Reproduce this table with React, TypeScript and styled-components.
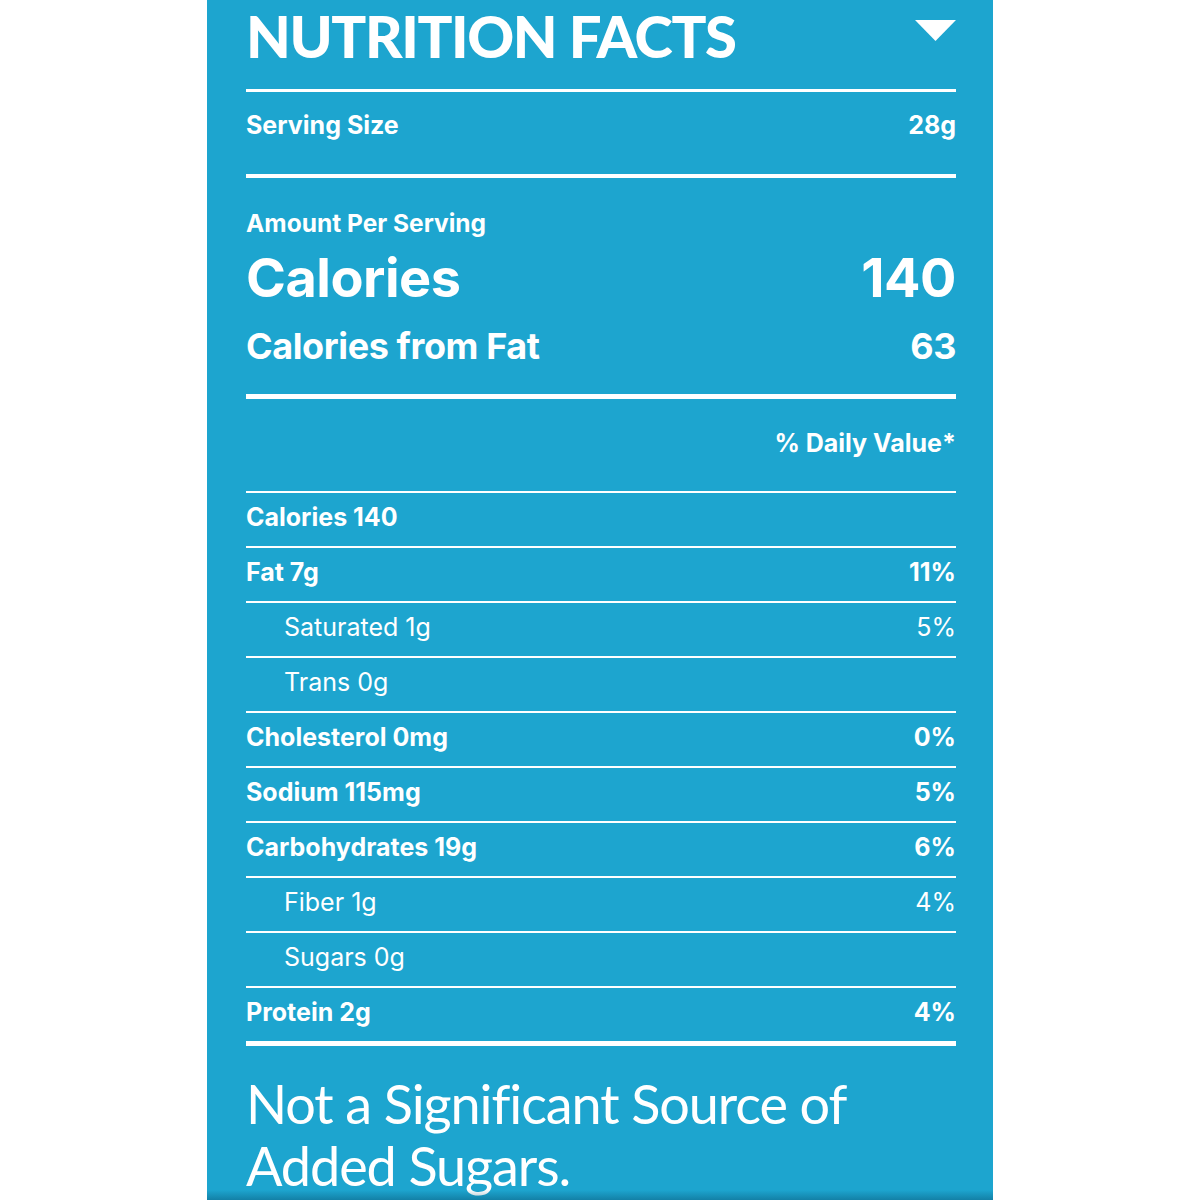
import React from "react";
import styled, { createGlobalStyle } from "styled-components";

const GlobalStyle = createGlobalStyle`
  html, body { margin: 0; padding: 0; background: #ffffff; }
  body { font-family: Inter, Lato, sans-serif; }
`;

const BLUE = "#1da5cf";

const Page = styled.div`
  height: 1200px;
  overflow: hidden;
  display: flex;
  justify-content: center;
  background: #ffffff;
`;

const Panel = styled.section`
  position: relative;
  width: 786px;
  height: 1200px;
  box-sizing: border-box;
  padding: 0 37px 0 39px;
  background: ${BLUE};
  color: #ffffff;
  font-family: Inter, Lato, sans-serif;
  &::after {
    content: "";
    position: absolute;
    left: 0;
    right: 0;
    bottom: 0;
    height: 10px;
    background: linear-gradient(to bottom, rgba(0, 60, 90, 0), rgba(0, 60, 90, 0.35));
  }
`;

const Header = styled.header`
  height: 89px;
  display: flex;
  align-items: flex-start;
  justify-content: space-between;
`;

const Title = styled.h1`
  margin: 0;
  padding-top: 4px;
  font-family: Lato, Inter, sans-serif;
  font-size: 58px;
  line-height: 64px;
  font-weight: 900;
  letter-spacing: -1.4px;
`;

const Caret = styled.svg`
  margin-top: 20px;
  width: 41px;
  height: 21px;
`;

const Rule = styled.div<{ $w: number }>`
  height: ${(p) => p.$w}px;
  background: #ffffff;
`;

const ServingRow = styled.div`
  height: 82px;
  box-sizing: border-box;
  padding-top: 18px;
  display: flex;
  align-items: flex-start;
  justify-content: space-between;
  font-size: 25px;
  line-height: 30px;
  font-weight: 700;
`;

const Row = styled.div<{ $indent?: boolean; $light?: boolean }>`
  height: 53px;
  box-sizing: border-box;
  padding: 0 0 6px ${(p) => (p.$indent ? 38 : 0)}px;
  display: flex;
  align-items: center;
  justify-content: space-between;
  font-size: 25px;
  font-weight: ${(p) => (p.$light ? 400 : 700)};
`;

const AmountBlock = styled.div`
  height: 216px;
  display: flex;
  flex-direction: column;
`;

const AmountLabel = styled.div`
  margin-top: 30px;
  font-size: 24.5px;
  line-height: 30px;
  font-weight: 700;
`;

const BigLine = styled.div<{ $size: number; $mt: number; $lh: number; $ls: number }>`
  margin-top: ${(p) => p.$mt}px;
  display: flex;
  justify-content: space-between;
  font-size: ${(p) => p.$size}px;
  line-height: ${(p) => p.$lh}px;
  letter-spacing: ${(p) => p.$ls}px;
  font-weight: 700;
`;

const DailyRow = styled.div`
  height: 92px;
  box-sizing: border-box;
  padding-bottom: 5px;
  display: flex;
  align-items: center;
  justify-content: flex-end;
  font-size: 25px;
  font-weight: 700;
`;

const Footer = styled.p`
  margin: 27px 0 0;
  font-family: Lato, Inter, sans-serif;
  font-size: 54px;
  line-height: 62px;
  font-weight: 400;
  letter-spacing: -1.1px;
`;

type Nutrient = { label: string; value: string; sub?: boolean };

const nutrients: Nutrient[] = [
  { label: "Calories 140", value: "" },
  { label: "Fat 7g", value: "11%" },
  { label: "Saturated 1g", value: "5%", sub: true },
  { label: "Trans 0g", value: "", sub: true },
  { label: "Cholesterol 0mg", value: "0%" },
  { label: "Sodium 115mg", value: "5%" },
  { label: "Carbohydrates 19g", value: "6%" },
  { label: "Fiber 1g", value: "4%", sub: true },
  { label: "Sugars 0g", value: "", sub: true },
  { label: "Protein 2g", value: "4%" },
];

export default function App() {
  return (
    <Page>
      <GlobalStyle />
      <Panel>
        <Header>
          <Title>NUTRITION FACTS</Title>
          <Caret viewBox="0 0 41 21">
            <polygon points="0,0 41,0 20.5,21" fill="#ffffff" />
          </Caret>
        </Header>
        <Rule $w={3} />
        <ServingRow>
          <span>Serving Size</span>
          <span>28g</span>
        </ServingRow>
        <Rule $w={4} />
        <AmountBlock>
          <AmountLabel>Amount Per Serving</AmountLabel>
          <BigLine $size={54} $mt={10} $lh={60} $ls={-0.5}>
            <span>Calories</span>
            <span>140</span>
          </BigLine>
          <BigLine $size={36} $mt={18} $lh={40} $ls={-0.4}>
            <span>Calories from Fat</span>
            <span>63</span>
          </BigLine>
        </AmountBlock>
        <Rule $w={5} />
        <DailyRow>% Daily Value*</DailyRow>
        {nutrients.map((n) => (
          <React.Fragment key={n.label}>
            <Rule $w={2} />
            <Row $indent={n.sub} $light={n.sub}>
              <span>{n.label}</span>
              <span>{n.value}</span>
            </Row>
          </React.Fragment>
        ))}
        <Rule $w={5} />
        <Footer>
          Not a Significant Source of
          <br />
          Added Sugars.
        </Footer>
      </Panel>
    </Page>
  );
}
